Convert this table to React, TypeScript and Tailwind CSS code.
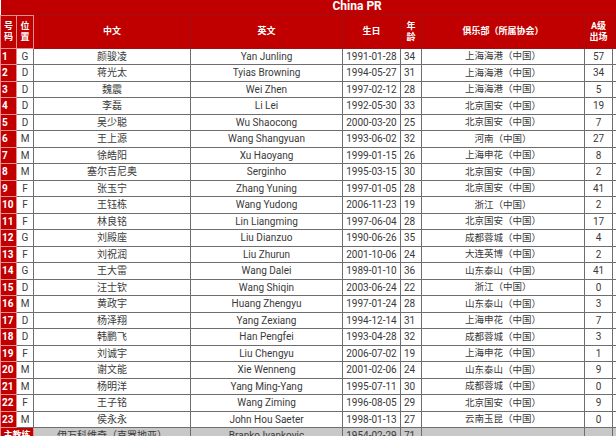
import React from "react";

type Player = [number, string, string, string, string, number, string, number];

const players: Player[] = [
  [1, "G", "颜骏凌", "Yan Junling", "1991-01-28", 34, "上海海港（中国）", 57],
  [2, "D", "蒋光太", "Tyias Browning", "1994-05-27", 31, "上海海港（中国）", 34],
  [3, "D", "魏震", "Wei Zhen", "1997-02-12", 28, "上海海港（中国）", 5],
  [4, "D", "李磊", "Li Lei", "1992-05-30", 33, "北京国安（中国）", 19],
  [5, "D", "吴少聪", "Wu Shaocong", "2000-03-20", 25, "北京国安（中国）", 7],
  [6, "M", "王上源", "Wang Shangyuan", "1993-06-02", 32, "河南（中国）", 27],
  [7, "M", "徐皓阳", "Xu Haoyang", "1999-01-15", 26, "上海申花（中国）", 8],
  [8, "M", "塞尔吉尼奥", "Serginho", "1995-03-15", 30, "北京国安（中国）", 2],
  [9, "F", "张玉宁", "Zhang Yuning", "1997-01-05", 28, "北京国安（中国）", 41],
  [10, "F", "王钰栋", "Wang Yudong", "2006-11-23", 19, "浙江（中国）", 2],
  [11, "F", "林良铭", "Lin Liangming", "1997-06-04", 28, "北京国安（中国）", 17],
  [12, "G", "刘殿座", "Liu Dianzuo", "1990-06-26", 35, "成都蓉城（中国）", 4],
  [13, "F", "刘祝润", "Liu Zhurun", "2001-10-06", 24, "大连英博（中国）", 2],
  [14, "G", "王大雷", "Wang Dalei", "1989-01-10", 36, "山东泰山（中国）", 41],
  [15, "D", "汪士钦", "Wang Shiqin", "2003-06-24", 22, "浙江（中国）", 0],
  [16, "M", "黄政宇", "Huang Zhengyu", "1997-01-24", 28, "山东泰山（中国）", 3],
  [17, "D", "杨泽翔", "Yang Zexiang", "1994-12-14", 31, "上海申花（中国）", 7],
  [18, "D", "韩鹏飞", "Han Pengfei", "1993-04-28", 32, "成都蓉城（中国）", 3],
  [19, "F", "刘诚宇", "Liu Chengyu", "2006-07-02", 19, "上海申花（中国）", 1],
  [20, "M", "谢文能", "Xie Wenneng", "2001-02-06", 24, "山东泰山（中国）", 9],
  [21, "M", "杨明洋", "Yang Ming-Yang", "1995-07-11", 30, "成都蓉城（中国）", 0],
  [22, "F", "王子铭", "Wang Ziming", "1996-08-05", 29, "北京国安（中国）", 9],
  [23, "M", "侯永永", "John Hou Saeter", "1998-01-13", 27, "云南玉昆（中国）", 0],
];

const font = "font-['Roboto','Noto_Sans_CJK_SC',sans-serif]";
const cell = "border border-[#6e6e6e] p-0 text-center align-middle";
const head = "border border-[#a01010] bg-[#c00000] p-0 text-center align-middle text-[9px] font-bold leading-[11px] text-white";

export default function App() {
  return (
    <div className={`w-[616px] h-[436px] overflow-hidden bg-white ${font}`}>
      <table className="w-[660px] table-fixed border-collapse">
        <colgroup>
          <col className="w-[16px]" />
          <col className="w-[17px]" />
          <col className="w-[157px]" />
          <col className="w-[152px]" />
          <col className="w-[58px]" />
          <col className="w-[21px]" />
          <col className="w-[163px]" />
          <col className="w-[28px]" />
          <col className="w-[48px]" />
        </colgroup>
        <thead>
          <tr className="h-[15px]">
            <th colSpan={9} className="bg-[#c00000] p-0 text-left align-top">
              <span className="block pl-[332px] text-[12px] font-bold leading-[13px] text-white">China PR</span>
            </th>
          </tr>
          <tr className="h-[33px]">
            <th className={`${head} border-[#e89090]`}>号<br />码</th>
            <th className={`${head} border-[#e89090]`}>位<br />置</th>
            <th className={head}>中文</th>
            <th className={head}>英文</th>
            <th className={head}>生日</th>
            <th className={head}>年<br />龄</th>
            <th className={head}>俱乐部（所属协会）</th>
            <th className={head}>A级<br />出场</th>
            <th className={head}></th>
          </tr>
        </thead>
        <tbody className="text-[10px] text-[#3a3a3a]">
          {players.map((p) => (
            <tr key={p[0]} className="h-[16.5px]">
              <td className="border border-[#e89090] bg-[#c00000] p-0 pl-[1px] text-left align-middle font-bold text-white">{p[0]}</td>
              <td className={cell}>{p[1]}</td>
              <td className={cell}>{p[2]}</td>
              <td className={cell}>{p[3]}</td>
              <td className={cell}>{p[4]}</td>
              <td className={`${cell} text-left pl-[3px]`}>{p[5]}</td>
              <td className={`${cell} text-[9.5px]`}>{p[6]}</td>
              <td className={cell}>{p[7]}</td>
              <td className={cell}></td>
            </tr>
          ))}
          <tr className="h-[16.5px]">
            <td colSpan={2} className="border border-[#e89090] bg-[#c00000] p-0 text-center align-middle text-[9px] font-bold text-white">主教练</td>
            <td className={`${cell} bg-[#c8c8c8]`}>伊万科维奇（克罗地亚）</td>
            <td className={`${cell} bg-[#c8c8c8]`}>Branko Ivankovic</td>
            <td className={`${cell} bg-[#c8c8c8]`}>1954-02-29</td>
            <td className={`${cell} bg-[#c8c8c8] text-left pl-[3px]`}>71</td>
            <td className={`${cell} bg-[#c8c8c8]`}></td>
            <td className={`${cell} bg-[#c8c8c8]`}></td>
            <td className={`${cell} bg-[#c8c8c8]`}></td>
          </tr>
        </tbody>
      </table>
    </div>
  );
}
